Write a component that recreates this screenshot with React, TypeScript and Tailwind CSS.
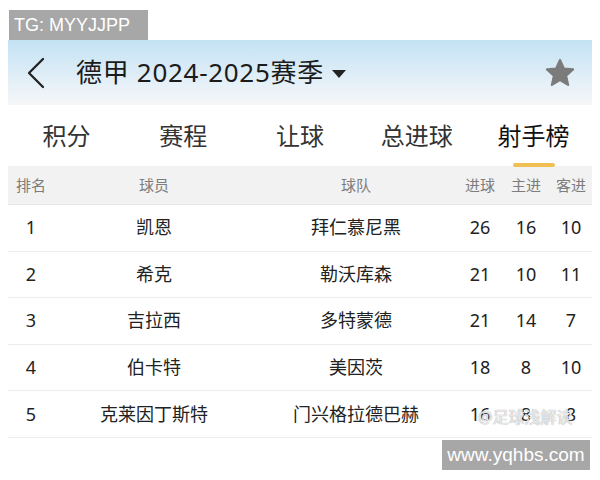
import React from "react";

const rows = [
  { rank: 1, player: "凯恩", team: "拜仁慕尼黑", g: 26, h: 16, a: 10 },
  { rank: 2, player: "希克", team: "勒沃库森", g: 21, h: 10, a: 11 },
  { rank: 3, player: "吉拉西", team: "多特蒙德", g: 21, h: 14, a: 7 },
  { rank: 4, player: "伯卡特", team: "美因茨", g: 18, h: 8, a: 10 },
  { rank: 5, player: "克莱因丁斯特", team: "门兴格拉德巴赫", g: 16, h: 8, a: 8 },
];

const tabs = ["积分", "赛程", "让球", "总进球", "射手榜"];

export default function App() {
  return (
    <div
      className="relative w-[600px] h-[480px] bg-white overflow-hidden"
      style={{ fontFamily: '"Noto Sans", "Noto Sans CJK SC", sans-serif' }}
    >
      <div className="pt-[10px] pl-[9px]">
        <div className="w-[139px] h-[30px] bg-[#a7a7a7] text-white text-[18px] leading-[30px] pl-[5px] font-['Liberation_Sans',sans-serif]">
          TG: MYYJJPP
        </div>
      </div>
      <div className="mx-[8px] w-[584px]">
        <div className="h-[65px] bg-gradient-to-b from-[#c3e2f4] to-[#f6f7f9] flex items-center">
          <svg width="20" height="32" viewBox="0 0 20 32" className="ml-[18px] mr-[30px]">
            <path d="M17 2 L3 16 L17 30" fill="none" stroke="#222" strokeWidth="2.3" strokeLinecap="round" strokeLinejoin="round" />
          </svg>
          <span className="text-[26px] text-[#1b1b1b] tracking-[0.7px]">德甲 2024-2025赛季</span>
          <svg width="14" height="8" viewBox="0 0 14 8" className="ml-[8px] mt-[2px]">
            <path d="M0 0 L14 0 L7 8 Z" fill="#222" />
          </svg>
          <div className="flex-1" />
          <svg width="32" height="32" viewBox="0 0 24 24" className="mr-[16px]">
            <path
              d="M12 2.2 L14.9 8.6 L21.8 9.3 L16.6 14 L18.1 20.9 L12 17.3 L5.9 20.9 L7.4 14 L2.2 9.3 L9.1 8.6 Z"
              fill="#7b7b7b"
              stroke="#7b7b7b"
              strokeWidth="1.6"
              strokeLinejoin="round"
            />
          </svg>
        </div>
        <div className="h-[61px] grid grid-cols-5 bg-white">
          {tabs.map((t, i) => (
            <div key={t} className="relative flex items-center justify-center">
              <span className={`text-[24px] ${i === 4 ? "text-[#111]" : "text-[#333]"}`}>{t}</span>
              {i === 4 && (
                <div className="absolute bottom-[-1px] left-1/2 -translate-x-1/2 w-[42px] h-[4px] rounded-full bg-[#f0c055]" />
              )}
            </div>
          ))}
        </div>
        <div className="h-[39px] bg-[#f2f2f2] border-b border-[#e6e6e6] grid grid-cols-[46px_200px_204px_44px_48px_42px] items-center text-[15px] text-[#7d7d7d]">
          <div className="text-center">排名</div>
          <div className="text-center">球员</div>
          <div className="text-center">球队</div>
          <div className="text-center">进球</div>
          <div className="text-center">主进</div>
          <div className="text-center">客进</div>
        </div>
        {rows.map((r) => (
          <div
            key={r.rank}
            className="h-[46.6px] border-b border-[#ececec] grid grid-cols-[46px_200px_204px_44px_48px_42px] items-center text-[18px] text-[#222]"
          >
            <div className="text-center">{r.rank}</div>
            <div className="text-center">{r.player}</div>
            <div className="text-center">{r.team}</div>
            <div className="text-center">{r.g}</div>
            <div className="text-center">{r.h}</div>
            <div className="text-center">{r.a}</div>
          </div>
        ))}
      </div>
      <div
        className="absolute left-[478px] top-[405px] text-[16px] text-white/70"
        style={{ textShadow: "0 0 1px #b5b5b5, 0 0 1px #b5b5b5" }}
      >
        @足球浅解读
      </div>
      <div className="absolute left-[442px] top-[440px] w-[148px] h-[30px] bg-[#a7a7a7] text-white text-[19px] leading-[30px] text-center font-['Liberation_Sans',sans-serif]">
        www.yqhbs.com
      </div>
    </div>
  );
}
